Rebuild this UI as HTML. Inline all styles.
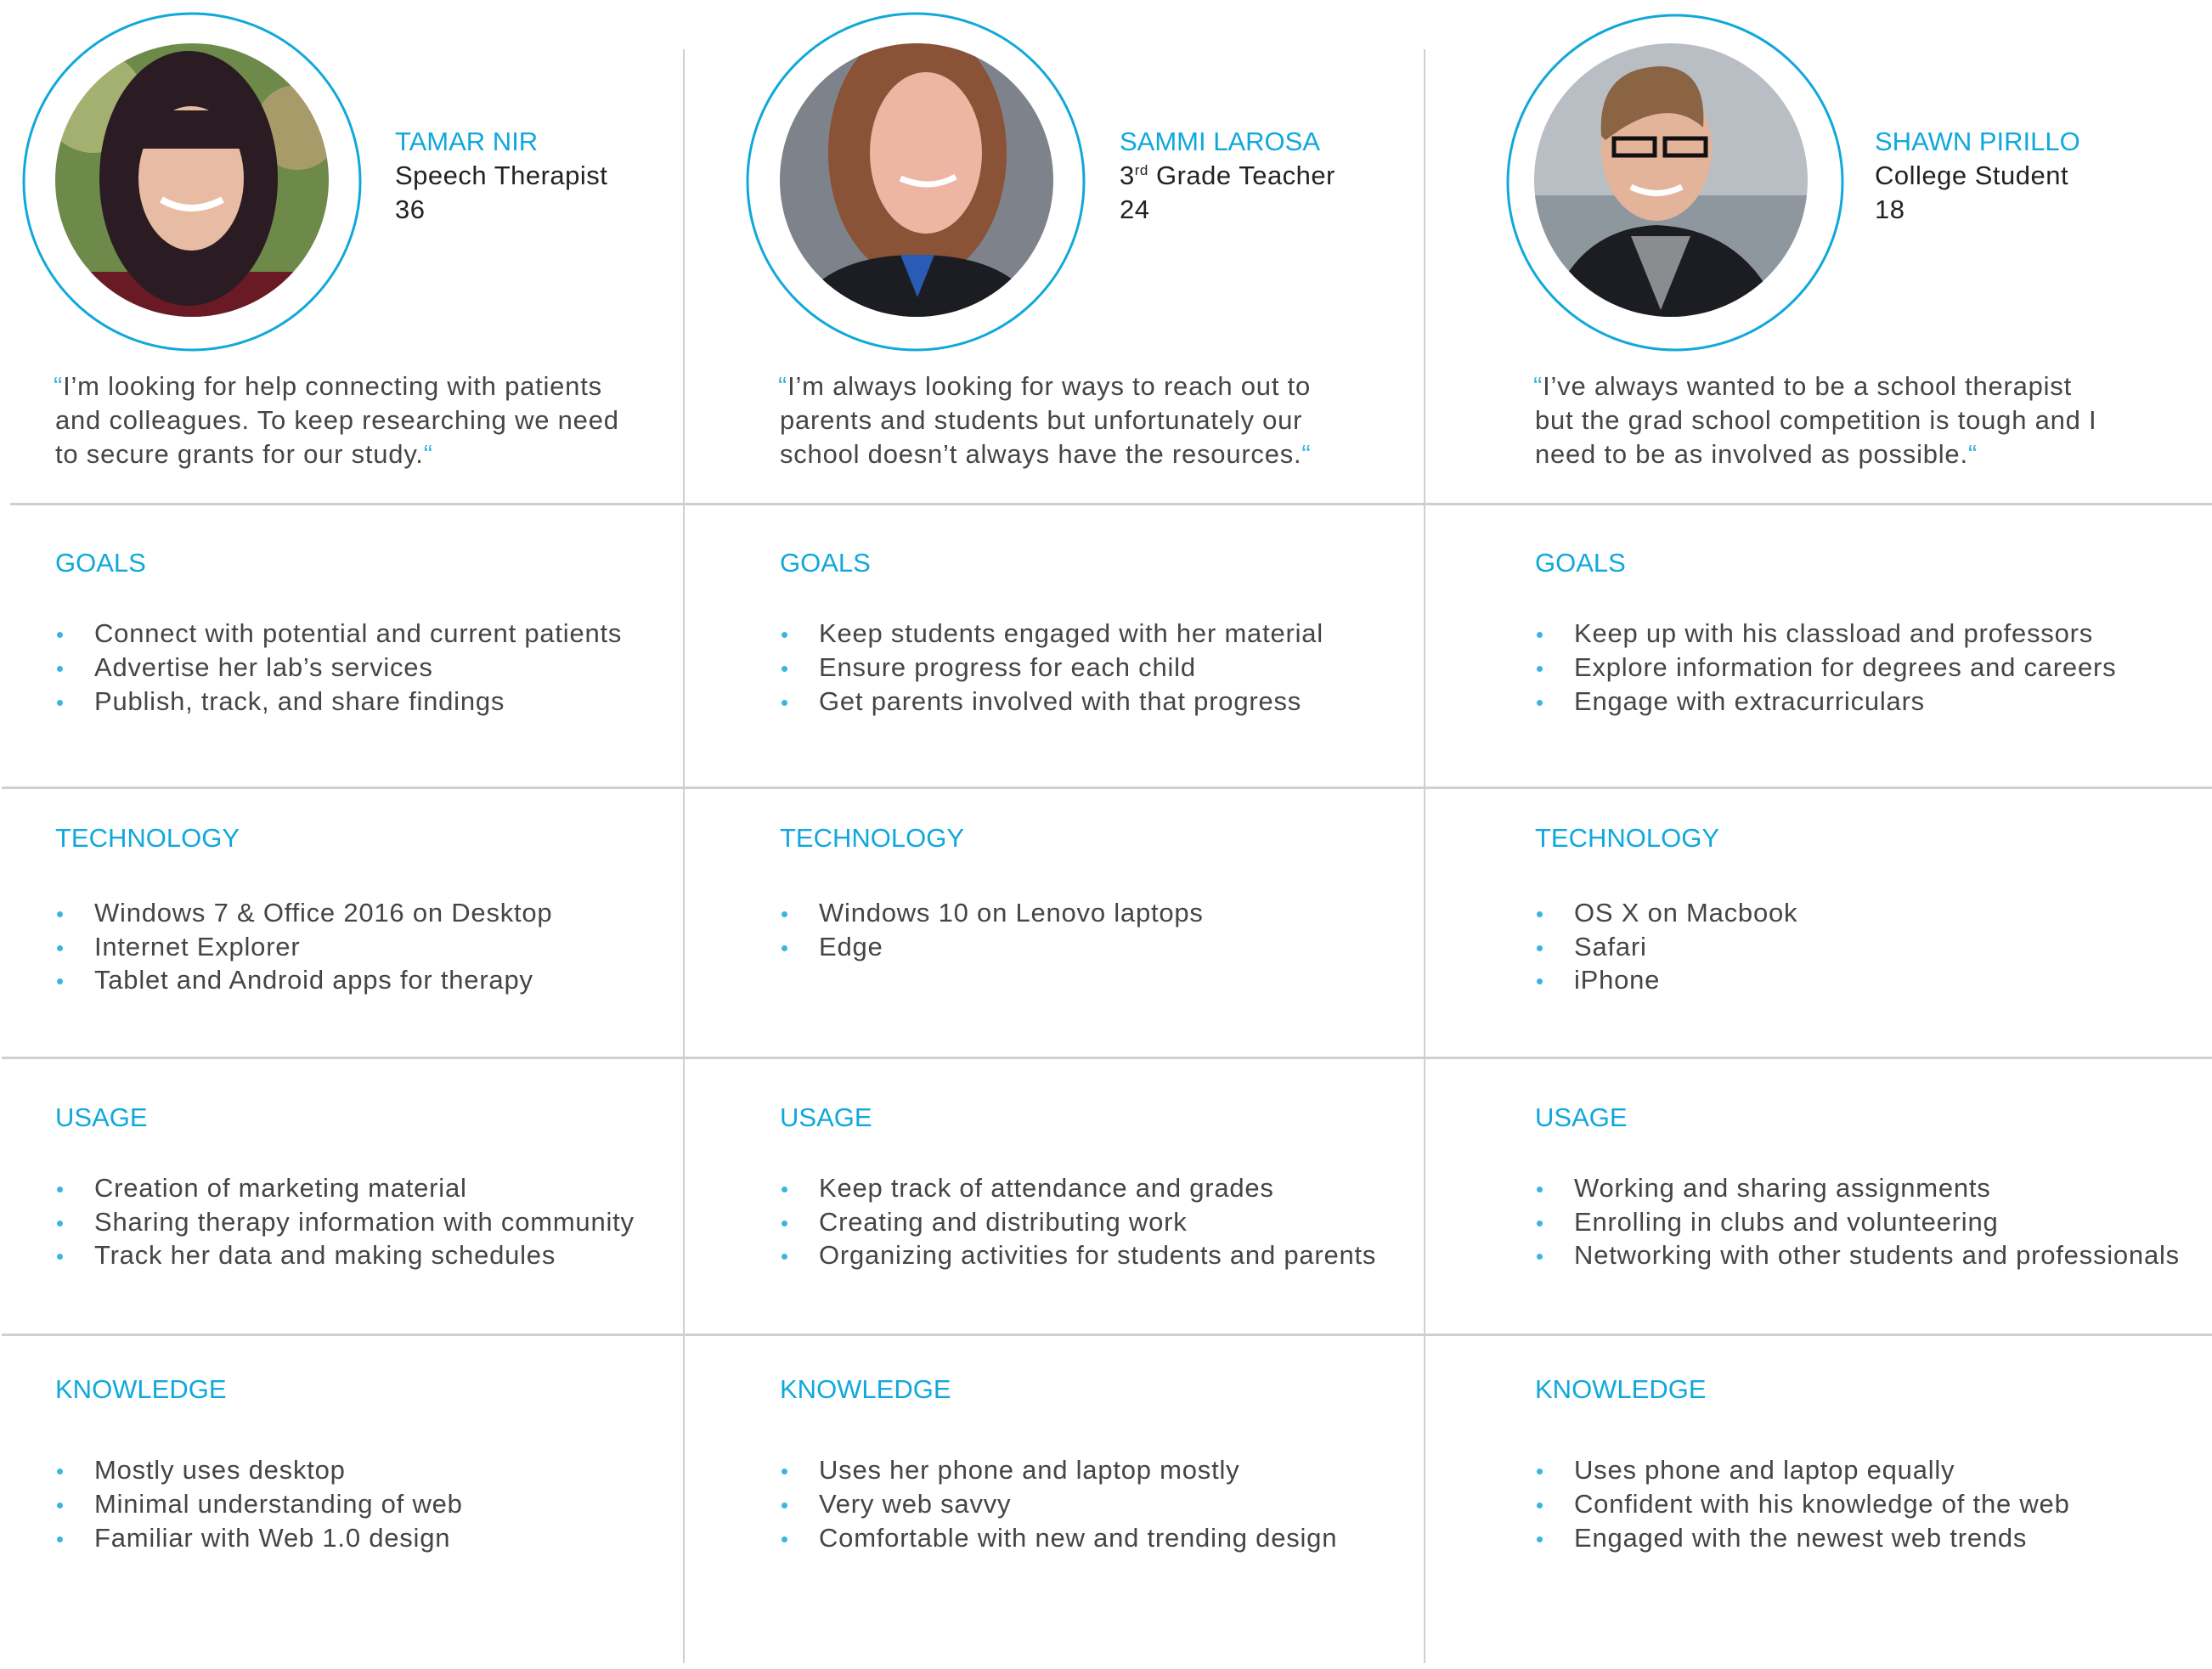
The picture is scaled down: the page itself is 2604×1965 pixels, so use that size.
<!DOCTYPE html>
<html><head><meta charset="utf-8">
<style>
*{margin:0;padding:0;box-sizing:border-box}
body{width:2604px;height:1965px;background:#fff;position:relative;overflow:hidden;font-family:"Liberation Sans",sans-serif;color:#454545}
.t{position:absolute;white-space:nowrap;font-size:31px;line-height:40px;letter-spacing:0.78px;margin-top:2px}
.n{position:absolute;white-space:nowrap;font-size:31px;line-height:40px;letter-spacing:0.5px;color:#222;margin-top:2px}
.h{position:absolute;white-space:nowrap;font-size:31px;line-height:40px;color:#10a8db;letter-spacing:0;margin-top:2px}
.vl{position:absolute;top:58px;width:2px;height:1900px;background:#cfcfcf}
.hl{position:absolute;height:3px;background:#cfcfcf;left:0;width:2604px}
.dot{position:absolute;width:7px;height:7px;border-radius:50%;background:#3ab5e0;margin-top:2px}
.q{color:#3ab5e0}
</style></head><body>
<div class="vl" style="left:804px"></div>
<div class="vl" style="left:1676px"></div>
<div class="hl" style="top:592px;left:12px"></div>
<div class="hl" style="top:926px;left:2px"></div>
<div class="hl" style="top:1244px;left:2px"></div>
<div class="hl" style="top:1570px;left:2px"></div>

<svg width="2604" height="420" style="position:absolute;left:0;top:0">
<defs>
<clipPath id="c1"><circle cx="226" cy="212" r="161"/></clipPath>
<clipPath id="c2"><circle cx="1079" cy="212" r="161"/></clipPath>
<clipPath id="c3"><circle cx="1967" cy="212" r="161"/></clipPath>
</defs>
<circle cx="226" cy="214" r="198" fill="none" stroke="#10a8db" stroke-width="3"/>
<circle cx="1078" cy="214" r="198" fill="none" stroke="#10a8db" stroke-width="3"/>
<circle cx="1972" cy="215" r="197" fill="none" stroke="#10a8db" stroke-width="3"/>
<g clip-path="url(#c1)">
<rect x="60" y="50" width="340" height="330" fill="#6d8a4a"/>
<circle cx="110" cy="120" r="60" fill="#a3b070"/><circle cx="350" cy="150" r="50" fill="#a89b6a"/>
<rect x="60" y="320" width="340" height="60" fill="#6a1a24"/>
<ellipse cx="222" cy="210" rx="105" ry="150" fill="#2a1c22"/>
<ellipse cx="225" cy="210" rx="62" ry="85" fill="#e8bba4"/>
<rect x="145" y="130" width="160" height="45" fill="#2a1c22"/>
<path d="M190 235 Q225 255 262 235" stroke="#fff" stroke-width="8" fill="none"/>
</g>
<g clip-path="url(#c2)">
<rect x="915" y="50" width="330" height="330" fill="#7e838b"/>
<ellipse cx="1080" cy="180" rx="105" ry="150" fill="#8a5236"/>
<path d="M930 380 Q960 300 1080 300 Q1200 300 1230 380Z" fill="#1b1d22"/>
<path d="M1060 300 L1080 350 L1100 300Z" fill="#2a5bb5"/>
<ellipse cx="1090" cy="180" rx="66" ry="95" fill="#edb5a2"/>
<path d="M1060 210 Q1095 225 1125 208" stroke="#fff" stroke-width="7" fill="none"/>
</g>
<g clip-path="url(#c3)">
<rect x="1805" y="50" width="330" height="330" fill="#b9bec5"/>
<rect x="1805" y="230" width="330" height="150" fill="#8e969e"/>
<path d="M1820 380 Q1850 270 1950 265 Q2060 270 2100 380Z" fill="#1c1d22"/>
<path d="M1920 278 L1955 365 L1990 278Z" fill="#8a8c8f"/>
<ellipse cx="1950" cy="175" rx="65" ry="85" fill="#e3b49a"/>
<path d="M1885 160 Q1880 80 1955 78 Q2010 80 2005 150 Q1960 110 1890 165Z" fill="#8a6443"/>
<rect x="1900" y="163" width="48" height="20" fill="none" stroke="#111" stroke-width="5"/>
<rect x="1960" y="163" width="48" height="20" fill="none" stroke="#111" stroke-width="5"/>
<path d="M1920 220 Q1950 235 1980 220" stroke="#fff" stroke-width="7" fill="none"/>
</g>
</svg>

<!-- Column 1 -->
<div class="h" style="left:465px;top:145px">TAMAR NIR</div>
<div class="n" style="left:465px;top:185px">Speech Therapist</div>
<div class="n" style="left:465px;top:225px">36</div>
<div class="t" style="left:63px;top:433px"><span class="q">“</span>I’m looking for help connecting with patients</div>
<div class="t" style="left:65px;top:473px">and colleagues. To keep researching we need</div>
<div class="t" style="left:65px;top:513px">to secure grants for our study.<span class="q">“</span></div>

<!-- Column 2 -->
<div class="h" style="left:1318px;top:145px">SAMMI LAROSA</div>
<div class="n" style="left:1318px;top:185px">3<sup style="font-size:17px;vertical-align:11px;line-height:0">rd</sup> Grade Teacher</div>
<div class="n" style="left:1318px;top:225px">24</div>
<div class="t" style="left:916px;top:433px"><span class="q">“</span>I’m always looking for ways to reach out to</div>
<div class="t" style="left:918px;top:473px">parents and students but unfortunately our</div>
<div class="t" style="left:918px;top:513px">school doesn’t always have the resources.<span class="q">“</span></div>

<!-- Column 3 -->
<div class="h" style="left:2207px;top:145px">SHAWN PIRILLO</div>
<div class="n" style="left:2207px;top:185px">College Student</div>
<div class="n" style="left:2207px;top:225px">18</div>
<div class="t" style="left:1805px;top:433px"><span class="q">“</span>I’ve always wanted to be a school therapist</div>
<div class="t" style="left:1807px;top:473px">but the grad school competition is tough and I</div>
<div class="t" style="left:1807px;top:513px">need to be as involved as possible.<span class="q">“</span></div>

<!-- Sections -->
<div class="h" style="left:65px;top:641px">GOALS</div>
<div class="h" style="left:918px;top:641px">GOALS</div>
<div class="h" style="left:1807px;top:641px">GOALS</div>
<div class="h" style="left:65px;top:965px">TECHNOLOGY</div>
<div class="h" style="left:918px;top:965px">TECHNOLOGY</div>
<div class="h" style="left:1807px;top:965px">TECHNOLOGY</div>
<div class="h" style="left:65px;top:1294px">USAGE</div>
<div class="h" style="left:918px;top:1294px">USAGE</div>
<div class="h" style="left:1807px;top:1294px">USAGE</div>
<div class="h" style="left:65px;top:1614px">KNOWLEDGE</div>
<div class="h" style="left:918px;top:1614px">KNOWLEDGE</div>
<div class="h" style="left:1807px;top:1614px">KNOWLEDGE</div>

<!-- Items col1 -->
<div class="dot" style="left:67px;top:742px"></div><div class="t" style="left:111px;top:724px">Connect with potential and current patients</div>
<div class="dot" style="left:67px;top:782px"></div><div class="t" style="left:111px;top:764px">Advertise her lab’s services</div>
<div class="dot" style="left:67px;top:822px"></div><div class="t" style="left:111px;top:804px">Publish, track, and share findings</div>
<div class="dot" style="left:67px;top:1071px"></div><div class="t" style="left:111px;top:1053px">Windows 7 &amp; Office 2016 on Desktop</div>
<div class="dot" style="left:67px;top:1111px"></div><div class="t" style="left:111px;top:1093px">Internet Explorer</div>
<div class="dot" style="left:67px;top:1150px"></div><div class="t" style="left:111px;top:1132px">Tablet and Android apps for therapy</div>
<div class="dot" style="left:67px;top:1395px"></div><div class="t" style="left:111px;top:1377px">Creation of marketing material</div>
<div class="dot" style="left:67px;top:1435px"></div><div class="t" style="left:111px;top:1417px">Sharing therapy information with community</div>
<div class="dot" style="left:67px;top:1474px"></div><div class="t" style="left:111px;top:1456px">Track her data and making schedules</div>
<div class="dot" style="left:67px;top:1727px"></div><div class="t" style="left:111px;top:1709px">Mostly uses desktop</div>
<div class="dot" style="left:67px;top:1767px"></div><div class="t" style="left:111px;top:1749px">Minimal understanding of web</div>
<div class="dot" style="left:67px;top:1807px"></div><div class="t" style="left:111px;top:1789px">Familiar with Web 1.0 design</div>

<!-- Items col2 -->
<div class="dot" style="left:920px;top:742px"></div><div class="t" style="left:964px;top:724px">Keep students engaged with her material</div>
<div class="dot" style="left:920px;top:782px"></div><div class="t" style="left:964px;top:764px">Ensure progress for each child</div>
<div class="dot" style="left:920px;top:822px"></div><div class="t" style="left:964px;top:804px">Get parents involved with that progress</div>
<div class="dot" style="left:920px;top:1071px"></div><div class="t" style="left:964px;top:1053px">Windows 10 on Lenovo laptops</div>
<div class="dot" style="left:920px;top:1111px"></div><div class="t" style="left:964px;top:1093px">Edge</div>
<div class="dot" style="left:920px;top:1395px"></div><div class="t" style="left:964px;top:1377px">Keep track of attendance and grades</div>
<div class="dot" style="left:920px;top:1435px"></div><div class="t" style="left:964px;top:1417px">Creating and distributing work</div>
<div class="dot" style="left:920px;top:1474px"></div><div class="t" style="left:964px;top:1456px">Organizing activities for students and parents</div>
<div class="dot" style="left:920px;top:1727px"></div><div class="t" style="left:964px;top:1709px">Uses her phone and laptop mostly</div>
<div class="dot" style="left:920px;top:1767px"></div><div class="t" style="left:964px;top:1749px">Very web savvy</div>
<div class="dot" style="left:920px;top:1807px"></div><div class="t" style="left:964px;top:1789px">Comfortable with new and trending design</div>

<!-- Items col3 -->
<div class="dot" style="left:1809px;top:742px"></div><div class="t" style="left:1853px;top:724px">Keep up with his classload and professors</div>
<div class="dot" style="left:1809px;top:782px"></div><div class="t" style="left:1853px;top:764px">Explore information for degrees and careers</div>
<div class="dot" style="left:1809px;top:822px"></div><div class="t" style="left:1853px;top:804px">Engage with extracurriculars</div>
<div class="dot" style="left:1809px;top:1071px"></div><div class="t" style="left:1853px;top:1053px">OS X on Macbook</div>
<div class="dot" style="left:1809px;top:1111px"></div><div class="t" style="left:1853px;top:1093px">Safari</div>
<div class="dot" style="left:1809px;top:1150px"></div><div class="t" style="left:1853px;top:1132px">iPhone</div>
<div class="dot" style="left:1809px;top:1395px"></div><div class="t" style="left:1853px;top:1377px">Working and sharing assignments</div>
<div class="dot" style="left:1809px;top:1435px"></div><div class="t" style="left:1853px;top:1417px">Enrolling in clubs and volunteering</div>
<div class="dot" style="left:1809px;top:1474px"></div><div class="t" style="left:1853px;top:1456px">Networking with other students and professionals</div>
<div class="dot" style="left:1809px;top:1727px"></div><div class="t" style="left:1853px;top:1709px">Uses phone and laptop equally</div>
<div class="dot" style="left:1809px;top:1767px"></div><div class="t" style="left:1853px;top:1749px">Confident with his knowledge of the web</div>
<div class="dot" style="left:1809px;top:1807px"></div><div class="t" style="left:1853px;top:1789px">Engaged with the newest web trends</div>
</body></html>
